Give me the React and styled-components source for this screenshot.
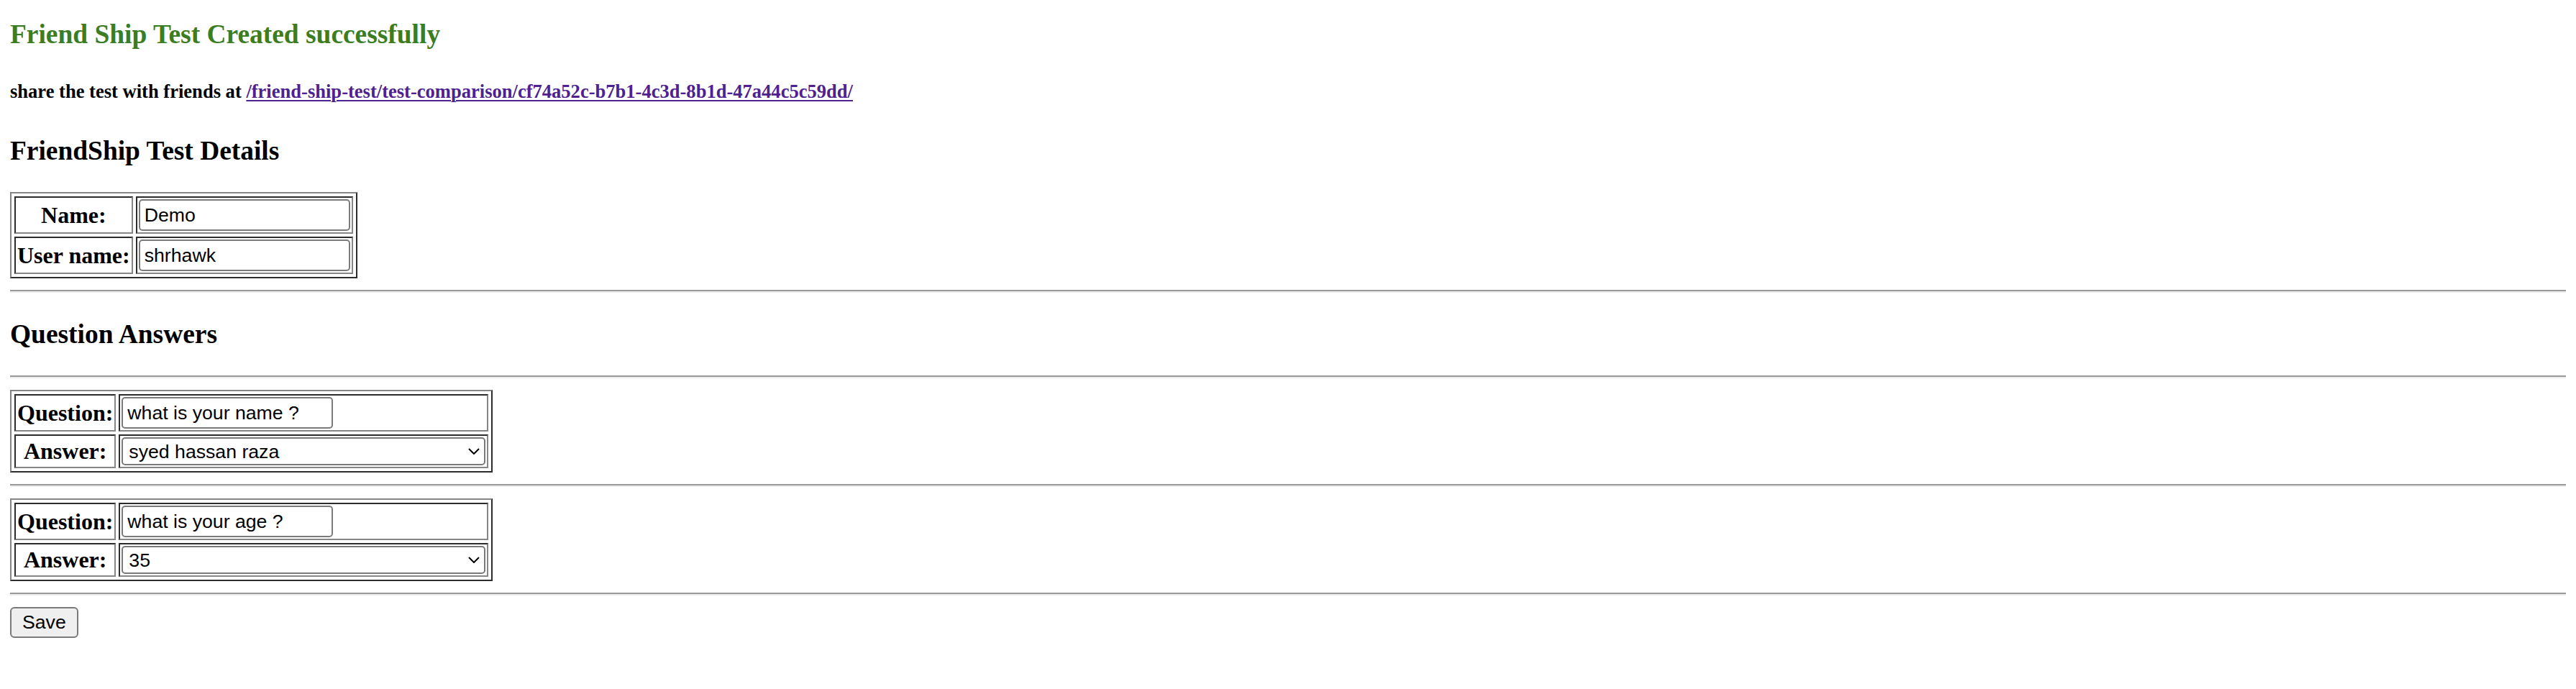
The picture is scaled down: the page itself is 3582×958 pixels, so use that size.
import React from 'react'
import styled, { createGlobalStyle } from 'styled-components'

const GlobalStyle = createGlobalStyle`
html, body {
  margin: 0;
  padding: 0;
  background: #fff;
}
body {
  font-family: 'Liberation Serif', 'Times New Roman', serif;
  color: #000;
}
`

const Page = styled.div`
padding: 0 14px 40px;
`

const Heading = styled.h3`
font-family: 'Liberation Serif', serif;
font-size: 37.44px;
line-height: 43px;
font-weight: bold;
margin: 36px 0;
color: ${p => p.$tone || '#000'};
`

const SuccessTitle = styled(Heading)`
margin-top: 26px;
`

const ShareLine = styled.h5`
font-family: 'Liberation Serif', serif;
font-size: 26.56px;
line-height: 31px;
font-weight: bold;
margin: 43px 0 45px;
`

const ShareLink = styled.a`
color: #4d2290;
text-decoration: underline;
text-decoration-thickness: 2px;
text-underline-offset: 3px;
`

const Divider = styled.hr`
height: 0;
margin: 16px 0;
border: 0;
border-top: 2px solid #9a9a9a;
border-bottom: 2px solid #ececec;
`

const FormTable = styled.table`
border: 2px solid;
border-color: #868686 #2c2c2c #2c2c2c #868686;
border-spacing: 4px;
margin: 0;
`

const HeadCell = styled.th`
border: 2px solid;
border-color: #2c2c2c #868686 #868686 #2c2c2c;
padding: 2px;
font-family: 'Liberation Serif', serif;
font-size: 32px;
line-height: 37px;
font-weight: bold;
text-align: center;
white-space: nowrap;
`

const FieldCell = styled.td`
border: 2px solid;
border-color: #2c2c2c #868686 #868686 #2c2c2c;
padding: 2px;
`

const TextInput = styled.input`
display: block;
box-sizing: border-box;
width: 294px;
height: 44px;
margin: 0;
padding: 0 6px;
border: 2px solid #7a7a7a;
border-radius: 5px;
background: #fff;
color: #000;
font-family: 'Liberation Sans', Arial, sans-serif;
font-size: 26.67px;
outline: none;
`

const SelectWrap = styled.div`
position: relative;
width: 506px;
`

const AnswerSelect = styled.select`
display: block;
box-sizing: border-box;
width: 100%;
height: 39px;
margin: 0;
padding: 0 40px 0 8px;
border: 2px solid #7a7a7a;
border-radius: 5px;
background: #fff;
color: #000;
font-family: 'Liberation Sans', Arial, sans-serif;
font-size: 26.67px;
appearance: none;
-webkit-appearance: none;
outline: none;
`

const Chevron = styled.svg`
position: absolute;
right: 8px;
top: 15px;
width: 16px;
height: 9px;
pointer-events: none;
`

const SaveButton = styled.button`
display: block;
box-sizing: border-box;
height: 43px;
margin: 0;
padding: 0 15px;
border: 2px solid #7a7a7a;
border-radius: 6px;
background: #efefef;
color: #000;
font-family: 'Liberation Sans', Arial, sans-serif;
font-size: 26.67px;
`

const shareUrl = '/friend-ship-test/test-comparison/cf74a52c-b7b1-4c3d-8b1d-47a44c5c59dd/'

const questions = [
  {
    question: 'what is your name ?',
    answer: 'syed hassan raza',
    options: ['syed hassan raza', 'hassan', 'shrhawk', 'someone else entirely from the list'],
  },
  {
    question: 'what is your age ?',
    answer: '35',
    options: ['25', '30', '35', '40', 'somewhere above forty or below twenty'],
  },
]

const QuestionBlock = ({ item }) => (
  <FormTable>
    <tbody>
      <tr>
        <HeadCell>Question:</HeadCell>
        <FieldCell>
          <TextInput type="text" defaultValue={item.question} />
        </FieldCell>
      </tr>
      <tr>
        <HeadCell>Answer:</HeadCell>
        <FieldCell>
          <SelectWrap>
            <AnswerSelect defaultValue={item.answer}>
              {item.options.map(o => (
                <option key={o} value={o}>{o}</option>
              ))}
            </AnswerSelect>
            <Chevron viewBox="0 0 16 9">
              <path d="M1 1 L8 8 L15 1" fill="none" stroke="#000" strokeWidth="2" />
            </Chevron>
          </SelectWrap>
        </FieldCell>
      </tr>
    </tbody>
  </FormTable>
)

const App = () => {
  return (
    <Page>
      <GlobalStyle />
      <SuccessTitle $tone="#3a7d22">Friend Ship Test Created successfully</SuccessTitle>
      <ShareLine>
        share the test with friends at <ShareLink href="#">{shareUrl}</ShareLink>
      </ShareLine>

      <Heading>FriendShip Test Details</Heading>
      <FormTable>
        <tbody>
          <tr>
            <HeadCell>Name:</HeadCell>
            <FieldCell>
              <TextInput type="text" defaultValue="Demo" />
            </FieldCell>
          </tr>
          <tr>
            <HeadCell>User name:</HeadCell>
            <FieldCell>
              <TextInput type="text" defaultValue="shrhawk" />
            </FieldCell>
          </tr>
        </tbody>
      </FormTable>
      <Divider />

      <Heading>Question Answers</Heading>
      <Divider />
      {questions.map(q => (
        <React.Fragment key={q.question}>
          <QuestionBlock item={q} />
          <Divider />
        </React.Fragment>
      ))}
      <SaveButton type="button">Save</SaveButton>
    </Page>
  )
}

export default App
